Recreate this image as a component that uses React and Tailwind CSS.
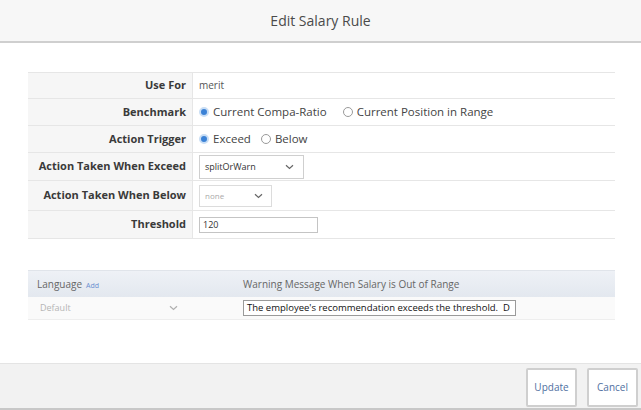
import React from "react";

const font = { fontFamily: '"Open Sans", "Noto Sans", sans-serif' };

function Radio({ checked, label, wide }) {
  return (
    <span className={wide ? "flex items-center gap-[4px] mr-[16px]" : "flex items-center gap-[4px] mr-[10px]"}>
      {checked ? (
        <span className="w-[10px] h-[10px] rounded-full bg-[#3b82d6] border-[2px] border-[#c9def5] box-border"></span>
      ) : (
        <span className="w-[10px] h-[10px] rounded-full border border-[#9a9a9a] bg-white box-border"></span>
      )}
      <span className="text-[11.5px] text-[#444]">{label}</span>
    </span>
  );
}

function Chevron({ color = "#666" }) {
  return (
    <svg width="9" height="6" viewBox="0 0 9 6" fill="none">
      <path d="M1 1.2 L4.5 4.5 L8 1.2" stroke={color} strokeWidth="1.2" />
    </svg>
  );
}

function Row({ label, h, children }) {
  return (
    <div className="flex border-b border-[#e6e6e6]" style={{ height: h }}>
      <div className="w-[165px] bg-[#f6f6f6] flex items-center justify-end pr-[6px] border-r border-[#e6e6e6]">
        <span className="text-[11px] font-bold text-[#3a3a3a] whitespace-nowrap">{label}</span>
      </div>
      <div className="flex-1 flex items-center pl-[6px]">{children}</div>
    </div>
  );
}

export default function App() {
  return (
    <div className="w-[641px] h-[410px] bg-white flex flex-col overflow-hidden" style={font}>
      <div className="h-[43px] bg-[#f7f7f7] border-b-2 border-[#cfcfcf] flex items-center justify-center shrink-0">
        <span className="text-[14px] text-[#4a4a4a]">Edit Salary Rule</span>
      </div>
      <div className="pt-[29px] pl-[28px] pr-[26px]">
        <div className="border-t border-[#e6e6e6]">
          <Row label="Use For" h={26}>
            <span className="text-[10px] text-[#555]">merit</span>
          </Row>
          <Row label="Benchmark" h={27}>
            <Radio checked wide label="Current Compa-Ratio" />
            <Radio label="Current Position in Range" />
          </Row>
          <Row label="Action Trigger" h={27}>
            <Radio checked label="Exceed" />
            <Radio label="Below" />
          </Row>
          <Row label="Action Taken When Exceed" h={28}>
            <div className="w-[105px] h-[24px] border border-[#cfcfcf] bg-white flex items-center justify-between pl-[5px] pr-[9px]">
              <span className="text-[9px] text-[#333]">splitOrWarn</span>
              <Chevron />
            </div>
          </Row>
          <Row label="Action Taken When Below" h={30}>
            <div className="w-[73px] h-[22px] border border-[#dcdcdc] bg-white flex items-center justify-between pl-[5px] pr-[8px]">
              <span className="text-[8px] text-[#aaa]">none</span>
              <Chevron />
            </div>
          </Row>
          <Row label="Threshold" h={28}>
            <div className="w-[119px] h-[16px] border border-[#c4c4c4] bg-white flex items-center pl-[3px]">
              <span className="text-[9px] text-[#333]">120</span>
            </div>
          </Row>
        </div>
      </div>
      <div className="pt-[31px] pl-[28px] pr-[26px]">
        <div className="h-[27px] flex items-center bg-gradient-to-b from-[#eef1f6] to-[#e3e8ef] border-t border-[#e0e4ea]">
          <div className="w-[215px] pl-[9px] flex items-baseline gap-[4px]">
            <span className="text-[10px] text-[#666]">Language</span>
            <span className="text-[7px] text-[#6b8fd0]">Add</span>
          </div>
          <span className="text-[10px] text-[#666]">Warning Message When Salary is Out of Range</span>
        </div>
        <div className="h-[23px] flex items-center bg-[#fafafa] border-b border-[#eeeeee]">
          <div className="w-[215px] pl-[12px] pr-[65px] flex items-center justify-between">
            <span className="text-[9px] text-[#b5b5b5]">Default</span>
            <Chevron color="#b0b0b0" />
          </div>
          <div className="w-[273px] h-[16px] border border-[#9a9a9a] bg-white flex items-center pl-[3px] overflow-hidden">
            <span className="text-[9.5px] text-[#111] whitespace-nowrap">The employee's recommendation exceeds the threshold.&nbsp;&nbsp;D</span>
          </div>
        </div>
      </div>
      <div className="mt-auto h-[47px] bg-[#f2f2f2] border-t border-[#e4e4e4] border-b-2 border-b-[#c8c8c8] flex items-end justify-end gap-[10px] pr-[3px] pb-[1px]">
        <button className="w-[51px] h-[39px] bg-white border-2 border-[#cfcfcf] text-[10px] text-[#4f6f9f] rounded-[2px]">Update</button>
        <button className="w-[51px] h-[39px] bg-white border-2 border-[#cfcfcf] text-[10px] text-[#4f6f9f] rounded-[2px]">Cancel</button>
      </div>
    </div>
  );
}
